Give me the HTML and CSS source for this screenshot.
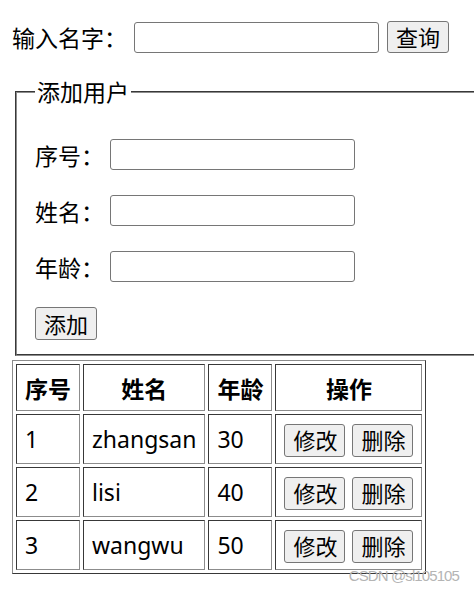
FILE: index.html
```html
<!DOCTYPE html>
<html lang="zh-CN">
<head>
  <meta charset="UTF-8" />
  <meta name="viewport" content="width=device-width, initial-scale=1" />
  <title>用户管理</title>
  <link rel="stylesheet" href="styles.css">
</head>
<body>

  <div class="search-row">
    <label for="searchName">输入名字：</label>
    <input type="text" id="searchName" />
    <button type="button" id="searchBtn">查询</button>
  </div>

  <fieldset class="add-box">
    <legend>添加用户</legend>
    <div class="form-row">
      <label for="uid">序号：</label>
      <input type="text" id="uid" />
    </div>
    <div class="form-row">
      <label for="uname">姓名：</label>
      <input type="text" id="uname" />
    </div>
    <div class="form-row">
      <label for="uage">年龄：</label>
      <input type="text" id="uage" />
    </div>
    <button type="button" id="addBtn">添加</button>
  </fieldset>

  <table class="user-table">
    <thead>
      <tr>
        <th class="col-id">序号</th>
        <th class="col-name">姓名</th>
        <th class="col-age">年龄</th>
        <th class="col-op">操作</th>
      </tr>
    </thead>
    <tbody>
      <tr>
        <td>1</td>
        <td>zhangsan</td>
        <td>30</td>
        <td class="ops"><button>修改</button><button>删除</button></td>
      </tr>
      <tr>
        <td>2</td>
        <td>lisi</td>
        <td>40</td>
        <td class="ops"><button>修改</button><button>删除</button></td>
      </tr>
      <tr>
        <td>3</td>
        <td>wangwu</td>
        <td>50</td>
        <td class="ops"><button>修改</button><button>删除</button></td>
      </tr>
    </tbody>
  </table>

  <div class="watermark">CSDN @sl105105</div>

</body>
</html>
```

FILE: styles.css
```css
html {
  overflow: hidden;
}

body {
  font-family: "Noto Sans", "Noto Sans CJK SC", sans-serif;
  font-size: 23px;
  color: #000;
  background: #fff;
  margin: 21px 0 0 12px;
  position: relative;
  min-height: 569px;
}

input {
  width: 245px;
  height: 31px;
  box-sizing: border-box;
  border: 1px solid #767676;
  border-radius: 3px;
  padding: 0 4px;
  font-size: 20px;
}

button {
  font-family: inherit;
  font-size: 22px;
  line-height: 26px;
  height: 33px;
  padding: 0 8px;
  background: #efefef;
  border: 1px solid #767676;
  border-radius: 3px;
  color: #000;
}

.search-row {
  display: flex;
  align-items: center;
  height: 32px;
}

.search-row label {
  width: 122px;
}

.search-row button {
  margin-left: 8px;
  height: 32px;
}

.add-box {
  width: 480px;
  margin: 26px 0 0 3px;
  padding: 34px 0 14px 18px;
  border: 2px groove #8c8c8c;
}

.add-box legend {
  padding: 0 2px;
  line-height: 26px;
}

.form-row {
  display: flex;
  align-items: center;
  height: 31px;
  margin-bottom: 25px;
}

.form-row label {
  width: 75px;
}

.user-table {
  margin-top: 4px;
  border: 1px outset #8c8c8c;
  border-spacing: 3px;
}

.user-table th,
.user-table td {
  border: 1px inset #8c8c8c;
  padding: 0 8px;
  text-align: left;
  white-space: nowrap;
}

.user-table th {
  text-align: center;
  height: 45px;
  font-weight: bold;
}

.user-table td {
  height: 48px;
}

.col-id { width: 46px; }
.col-name { width: 104px; }
.col-age { width: 45px; }

.ops button {
  width: 61px;
  vertical-align: middle;
}

.ops button + button {
  margin-left: 7px;
}

.watermark {
  position: absolute;
  right: 15px;
  top: 546px;
  font-family: "Liberation Sans", Arial, sans-serif;
  font-size: 15px;
  letter-spacing: -0.9px;
  color: #b4b4b4;
}
```
